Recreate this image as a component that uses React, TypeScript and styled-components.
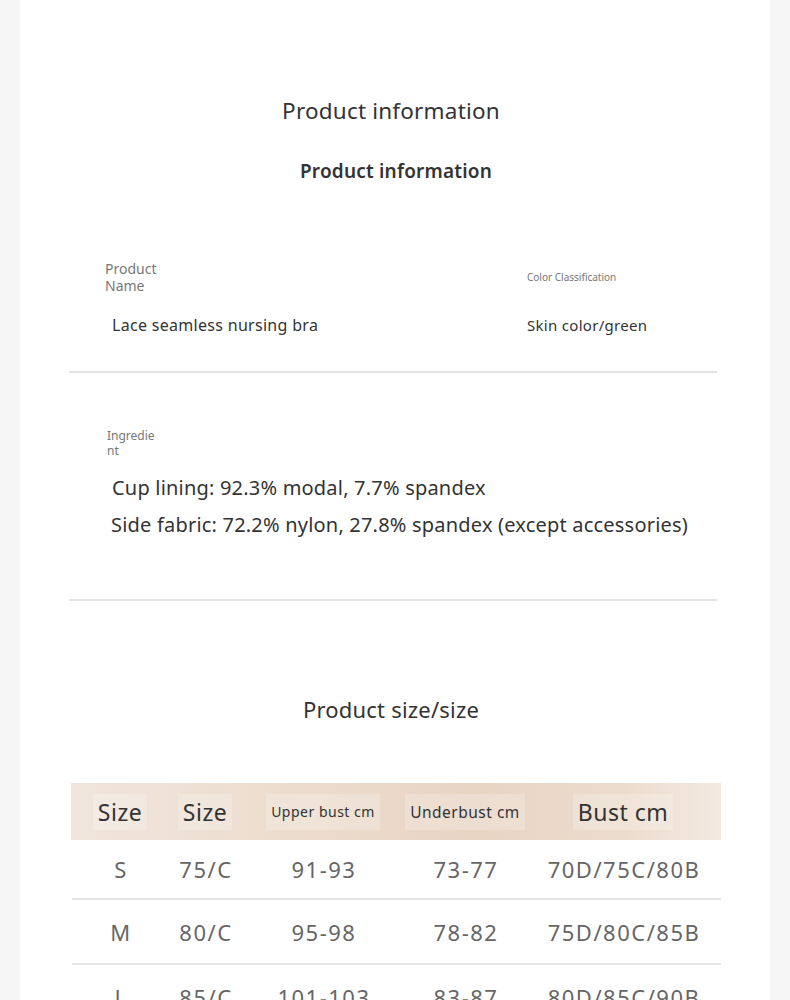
import React from 'react'
import styled, { createGlobalStyle } from 'styled-components'

const GlobalStyle = createGlobalStyle`
  body {
    margin: 0;
    background: #f6f6f6;
    font-family: "Noto Sans", "Open Sans", sans-serif;
  }
`

const Page = styled.div`
  margin: 0 20px;
  height: 1000px;
  overflow: hidden;
  background: #ffffff;
  padding-top: 94px;
  box-sizing: border-box;
`

const Title = styled.h1<{ $size: number; $weight: number; $shift?: number }>`
  margin: 0;
  text-align: center;
  font-size: ${p => p.$size}px;
  font-weight: ${p => p.$weight};
  line-height: 34px;
  color: #333;
  letter-spacing: 0.2px;
  transform: translateX(${p => p.$shift || 0}px);
`

const InfoBlock = styled.div`
  margin: 0 53px 0 49px;
  border-bottom: 2px solid #e3e3e3;
`

const InfoRow = styled.div`
  display: grid;
  grid-template-columns: 422px 1fr;
  padding-top: 72px;
  padding-bottom: 34px;
`

const Field = styled.div<{ $indent: number }>`
  padding-left: ${p => p.$indent}px;
`

const Label = styled.div<{ $size: number; $width: number; $height: number }>`
  font-size: ${p => p.$size}px;
  line-height: ${p => p.$size + 3}px;
  color: #777;
  width: ${p => p.$width}px;
  height: ${p => p.$height}px;
  word-break: break-all;
  display: flex;
  align-items: center;
`

const Value = styled.div<{ $size: number }>`
  margin-top: 19px;
  font-size: ${p => p.$size}px;
  line-height: 24px;
  color: #333;
  letter-spacing: 0.3px;
`

const IngredientBlock = styled.div`
  margin: 0 53px 0 49px;
  border-bottom: 2px solid #e3e3e3;
  padding: 55px 0 62px 0;
`

const IngredientLines = styled.div`
  margin-top: 18px;
  padding-left: 42px;
  display: flex;
  flex-direction: column;
  gap: 13px;
`

const Line = styled.div<{ $nudge?: number }>`
  font-size: 20px;
  line-height: 24px;
  color: #333;
  letter-spacing: 0.2px;
  margin-left: ${p => p.$nudge || 0}px;
`

const SizeTitle = styled(Title)`
  margin-top: 91px;
  margin-bottom: 57px;
`

const Table = styled.div`
  margin: 0 49px 0 51px;
`

const Grid = styled.div`
  display: grid;
  grid-template-columns: 98px 72px 164px 120px 196px;
  align-items: center;
`

const HeaderRow = styled(Grid)`
  height: 57px;
  background: linear-gradient(90deg, #f0e5dc 0%, #ecdccd 35%, #e8d4c3 62%, #ecdccd 85%, #f3e9e1 100%);
`

const HeadCell = styled.div<{ $size: number }>`
  justify-self: center;
  padding: 0 5px;
  line-height: 36px;
  white-space: nowrap;
  font-size: ${p => p.$size}px;
  color: #333;
  letter-spacing: 0.5px;
  background: rgba(255, 255, 255, 0.22);
`

const BodyRow = styled(Grid)<{ $h: number }>`
  height: ${p => p.$h}px;
  border-bottom: 2px solid #e6e6e6;
  margin-left: 1px;
`

const Cell = styled.div`
  justify-self: center;
  font-size: 22px;
  color: #666;
  letter-spacing: 1.5px;
`

const rows = [
  ['S', '75/C', '91-93', '73-77', '70D/75C/80B'],
  ['M', '80/C', '95-98', '78-82', '75D/80C/85B'],
  ['L', '85/C', '101-103', '83-87', '80D/85C/90B'],
]

export default function App() {
  return (
    <>
      <GlobalStyle />
      <Page>
        <Title $size={22.5} $weight={400} $shift={-4}>Product information</Title>
        <Title $size={19} $weight={600} $shift={1} style={{ marginTop: 26 }}>Product information</Title>

        <InfoBlock>
          <InfoRow>
            <Field $indent={36}>
              <Label $size={14} $width={60} $height={34}>Product Name</Label>
              <Value $size={16} style={{ marginLeft: 7 }}>Lace seamless nursing bra</Value>
            </Field>
            <Field $indent={36}>
              <Label $size={10} $width={140} $height={34}>Color Classification</Label>
              <Value $size={15}>Skin color/green</Value>
            </Field>
          </InfoRow>
        </InfoBlock>

        <IngredientBlock>
          <Field $indent={38}>
            <Label $size={12} $width={52} $height={30}>Ingredient</Label>
          </Field>
          <IngredientLines>
            <Line $nudge={1}>Cup lining: 92.3% modal, 7.7% spandex</Line>
            <Line>Side fabric: 72.2% nylon, 27.8% spandex (except accessories)</Line>
          </IngredientLines>
        </IngredientBlock>

        <SizeTitle $size={22} $weight={400} $shift={-4}>Product size/size</SizeTitle>

        <Table>
          <HeaderRow>
            <HeadCell $size={23}>Size</HeadCell>
            <HeadCell $size={23}>Size</HeadCell>
            <HeadCell $size={14}>Upper bust cm</HeadCell>
            <HeadCell $size={15.5}>Underbust cm</HeadCell>
            <HeadCell $size={23}>Bust cm</HeadCell>
          </HeaderRow>
          {rows.map((r, i) => (
            <BodyRow key={r[0]} $h={i === 0 ? 58 : 63}>
              {r.map((c, j) => (
                <Cell key={j}>{c}</Cell>
              ))}
            </BodyRow>
          ))}
        </Table>
      </Page>
    </>
  )
}
